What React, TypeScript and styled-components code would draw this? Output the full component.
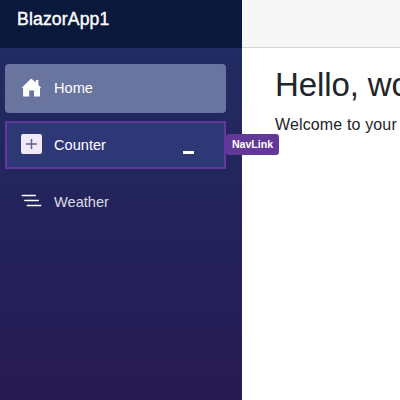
import React from "react";
import styled, { createGlobalStyle } from "styled-components";

const GlobalStyle = createGlobalStyle`
  * { box-sizing: border-box; }
  body { margin: 0; overflow: hidden; background: #fff; font-family: "Liberation Sans", Arial, sans-serif; color: #212529; }
`;

const Page = styled.div`
  display: flex;
  width: 400px;
  height: 400px;
  overflow: hidden;
`;

const Sidebar = styled.aside`
  flex: 0 0 242px;
  height: 400px;
  background: linear-gradient(180deg, #222b63 48px, #251f58 300px, #271a50 400px);
`;

const Brand = styled.header`
  height: 48px;
  padding: 8px 0 0 17px;
  background: #0a183c;
  color: #fff;
  font-size: 17.6px;
  letter-spacing: 0.15px;
  line-height: 22px;
  -webkit-text-stroke: 0.4px #fff;
`;

const Nav = styled.nav`
  display: flex;
  flex-direction: column;
  gap: 8px;
  padding: 16px 16px 0 5px;
`;

const NavLink = styled.a<{ $state?: "active" | "hover" }>`
  position: relative;
  display: flex;
  align-items: center;
  height: ${(p) => (p.$state === "hover" ? "48px" : "49px")};
  padding: 0 0 2px 16px;
  gap: 12px;
  font-size: 14.6px;
  line-height: 18px;
  color: ${(p) => (p.$state ? "#fff" : "#dcdce2")};
  border-radius: ${(p) => (p.$state === "hover" ? "0" : "4px")};
  background: ${(p) => (p.$state === "active" ? "#69759f" : p.$state === "hover" ? "#2f3876" : "transparent")};
  box-shadow: ${(p) => (p.$state === "hover" ? "inset 0 0 0 2px #623998" : "none")};

  svg { flex: none; }
`;

const Label = styled.span<{ $drop?: boolean }>`
  padding-top: ${(p) => (p.$drop ? "2px" : "0")};
`;

const Badge = styled.span`
  position: absolute;
  left: 221px;
  top: 13px;
  width: 53px;
  height: 21px;
  border-radius: 3px;
  background: #623998;
  color: #fff;
  font-size: 10.6px;
  font-weight: 700;
  line-height: 21px;
  text-align: center;
`;

const Caret = styled.span`
  position: absolute;
  left: 178px;
  top: 30px;
  width: 11px;
  height: 3px;
  background: #fff;
`;

const Main = styled.main`
  flex: 1;
  min-width: 0;
`;

const TopBar = styled.div`
  height: 48px;
  background: #f7f7f7;
  border-bottom: 1px solid #d6d5d5;
`;

const Content = styled.article`
  padding: 17px 0 0 33px;
  white-space: nowrap;
`;

const Title = styled.h1`
  margin: 0 0 8px;
  font-size: 33px;
  font-weight: 400;
  line-height: 40px;
  letter-spacing: -0.1px;
`;

const Text = styled.p`
  margin: 0;
  font-size: 16px;
  line-height: 24px;
  letter-spacing: 0.14px;
`;

const HomeIcon = () => (
  <svg width="21" height="20" viewBox="0 0 21 20" fill="#fff">
    <path d="M9.6 0.9Q10.2 0.3 10.8 0.9L14.8 4.4V2H17.4V7L20 9.4L19 10.6V18Q19 18.6 18.4 18.6H13V12.5H8.2V18.6H2.8Q2.1 18.6 2.1 18V10.6L1 9.5Z" />
  </svg>
);

const PlusIcon = () => (
  <svg width="21" height="20" viewBox="0 0 21 20">
    <rect width="21" height="20" rx="2.2" fill="#f0eaf6" />
    <path d="M5 10H16M10.5 5V15" stroke="#5d6197" strokeWidth="1.5" />
  </svg>
);

const ListIcon = () => (
  <svg width="21" height="20" viewBox="0 0 21 20" stroke="#fff" strokeWidth="1.3" strokeLinecap="round">
    <path d="M1.2 4.5H14.4M3.8 9.5H17.4M6.2 14.5H19.8" />
  </svg>
);

export default function App() {
  return (
    <>
      <GlobalStyle />
      <Page>
        <Sidebar>
          <Brand>BlazorApp1</Brand>
          <Nav>
            <NavLink $state="active"><HomeIcon /><Label>Home</Label></NavLink>
            <NavLink $state="hover">
              <PlusIcon /><Label $drop>Counter</Label>
              <Caret />
              <Badge>NavLink</Badge>
            </NavLink>
            <NavLink><ListIcon /><Label $drop>Weather</Label></NavLink>
          </Nav>
        </Sidebar>
        <Main>
          <TopBar />
          <Content>
            <Title>Hello, world!</Title>
            <Text>Welcome to your new app.</Text>
          </Content>
        </Main>
      </Page>
    </>
  );
}
